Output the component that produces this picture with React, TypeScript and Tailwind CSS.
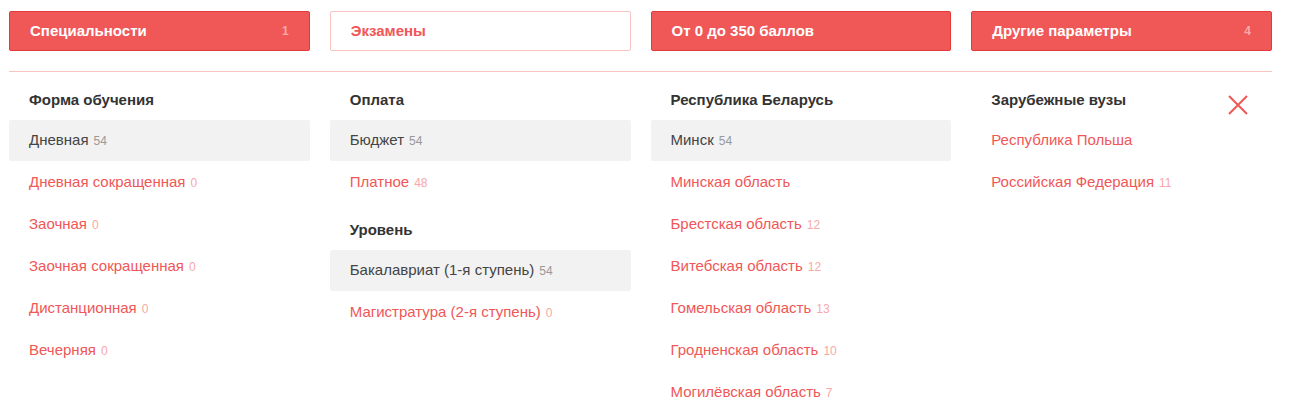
import React from "react";

type Item = { label: string; count: number; active?: boolean };
type Group = { title: string; items: Item[] };

const columns: Group[][] = [
  [
    {
      title: "Форма обучения",
      items: [
        { label: "Дневная", count: 54, active: true },
        { label: "Дневная сокращенная", count: 0 },
        { label: "Заочная", count: 0 },
        { label: "Заочная сокращенная", count: 0 },
        { label: "Дистанционная", count: 0 },
        { label: "Вечерняя", count: 0 },
      ],
    },
  ],
  [
    {
      title: "Оплата",
      items: [
        { label: "Бюджет", count: 54, active: true },
        { label: "Платное", count: 48 },
      ],
    },
    {
      title: "Уровень",
      items: [
        { label: "Бакалавриат (1-я ступень)", count: 54, active: true },
        { label: "Магистратура (2-я ступень)", count: 0 },
      ],
    },
  ],
  [
    {
      title: "Республика Беларусь",
      items: [
        { label: "Минск", count: 54, active: true },
        { label: "Минская область", count: -1 },
        { label: "Брестская область", count: 12 },
        { label: "Витебская область", count: 12 },
        { label: "Гомельская область", count: 13 },
        { label: "Гродненская область", count: 10 },
        { label: "Могилёвская область", count: 7 },
      ],
    },
  ],
  [
    {
      title: "Зарубежные вузы",
      items: [
        { label: "Республика Польша", count: -1 },
        { label: "Российская Федерация", count: 11 },
      ],
    },
  ],
];

const tabs = [
  { label: "Специальности", count: "1", filled: true },
  { label: "Экзамены", count: "", filled: false },
  { label: "От 0 до 350 баллов", count: "", filled: true },
  { label: "Другие параметры", count: "4", filled: true },
];

export default function App() {
  return (
    <div
      className="min-h-[414px] bg-white pl-[9px] pr-[25px] pt-[11px] text-[15px]"
      style={{ fontFamily: '"Liberation Sans", Arial, sans-serif' }}
    >
      <div className="grid grid-cols-4 gap-5">
        {tabs.map((t) => (
          <button
            key={t.label}
            className={`flex h-10 items-center justify-between rounded-[2px] border px-5 text-left font-bold ${
              t.filled
                ? "border-[#e23a3a] bg-[#f05757] text-white"
                : "border-[#f9c3c3] bg-white text-[#f05757]"
            }`}
          >
            <span>{t.label}</span>
            {t.count && <span className="text-[12px] text-[#f9a9a9]">{t.count}</span>}
          </button>
        ))}
      </div>

      <div className="mt-5 h-px bg-[#f7c4c4]" />

      <div className="relative grid grid-cols-4 gap-5 pt-2">
        {columns.map((groups, ci) => (
          <div key={ci}>
            {groups.map((g, gi) => (
              <div key={g.title} className={gi > 0 ? "mt-[7px]" : ""}>
                <div className="flex h-10 items-center px-5 font-bold text-[#333]">{g.title}</div>
                {g.items.map((it) => (
                  <div
                    key={it.label}
                    className={`mb-px flex h-[41px] items-center rounded-[2px] px-5 ${
                      it.active ? "bg-[#f2f2f2] text-[#444]" : "text-[#f05757]"
                    }`}
                  >
                    <span>{it.label}</span>
                    {it.count >= 0 && (
                      <span
                        className={`ml-[5px] text-[12px] ${it.active ? "text-[#999]" : "text-[#f7a8a8]"}`}
                      >
                        {it.count}
                      </span>
                    )}
                  </div>
                ))}
              </div>
            ))}
          </div>
        ))}
        <button className="absolute right-[24px] top-[23px] h-5 w-5" aria-label="Закрыть">
          <svg viewBox="0 0 20 20" width="20" height="20" fill="none" stroke="#f05757" strokeWidth="2">
            <path d="M1 1L19 19M19 1L1 19" />
          </svg>
        </button>
      </div>
    </div>
  );
}
